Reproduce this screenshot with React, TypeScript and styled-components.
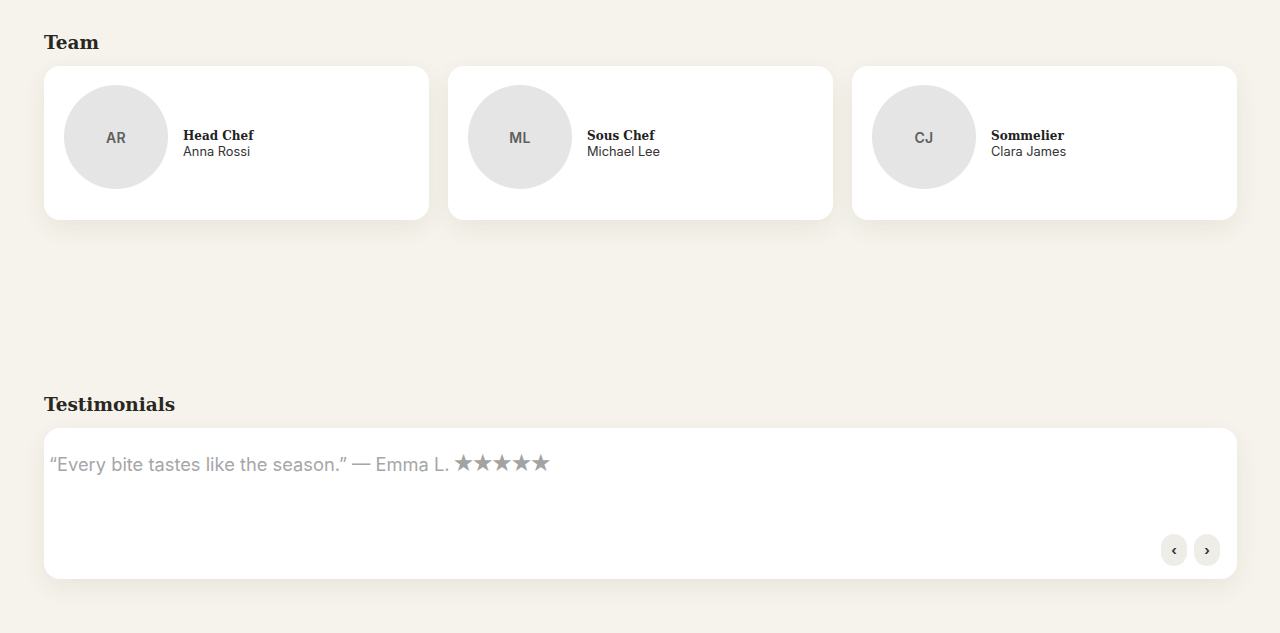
import React from "react";
import styled, { createGlobalStyle } from "styled-components";

const Global = createGlobalStyle`
  html, body { margin: 0; padding: 0; background: #f6f3ec; }
  body { font-family: Inter, "Noto Sans", sans-serif; }
`;

const Page = styled.main`
  padding: 31px 43px 40px 44px;
  min-height: 633px;
  box-sizing: border-box;
`;

const Section = styled.section<{ $gap?: number }>`
  margin-top: ${(p) => p.$gap ?? 0}px;
`;

const Heading = styled.h2`
  margin: 0 0 11px;
  font-family: "DejaVu Serif", Georgia, serif;
  font-weight: 700;
  font-size: 18.5px;
  line-height: 24px;
  color: #2a2723;
`;

const Grid = styled.div`
  display: grid;
  grid-template-columns: repeat(3, 1fr);
  gap: 19px;
`;

const Card = styled.div`
  background: #fff;
  border-radius: 16px;
  box-shadow: 0 8px 24px rgba(60, 50, 30, 0.07);
`;

const MemberCard = styled(Card)`
  display: flex;
  align-items: center;
  gap: 15px;
  height: 154px;
  box-sizing: border-box;
  padding: 19px 20px;
`;

const Avatar = styled.div`
  align-self: flex-start;
  width: 104px;
  height: 104px;
  border-radius: 50%;
  background: #e5e5e5;
  display: flex;
  align-items: center;
  justify-content: center;
  font-family: Inter, sans-serif;
  font-weight: 600;
  font-size: 14px;
  color: #5e5e5e;
  letter-spacing: 0.3px;
  flex-shrink: 0;
`;

const Info = styled.div`
  display: flex;
  flex-direction: column;
  padding-top: 1px;
`;

const Role = styled.div`
  font-family: "DejaVu Serif", Georgia, serif;
  font-weight: 700;
  font-size: 12px;
  line-height: 16px;
  color: #222;
`;

const Name = styled.div`
  font-family: Inter, sans-serif;
  font-size: 12.8px;
  line-height: 16px;
  color: #333;
`;

const TestimonialCard = styled(Card)`
  height: 151px;
  box-sizing: border-box;
  display: flex;
  flex-direction: column;
  justify-content: space-between;
  padding: 22px 17px 13px 5px;
`;

const Quote = styled.p`
  margin: 0;
  font-family: Inter, sans-serif;
  font-size: 18.3px;
  line-height: 28px;
  color: #a6a6a6;
`;

const Stars = styled.span`
  margin-left: -2px;
  font-family: "DejaVu Sans", sans-serif;
  font-size: 24px;
  line-height: 20px;
  letter-spacing: -2.2px;
  color: #a3a3a3;
`;

const Controls = styled.div`
  display: flex;
  justify-content: flex-end;
  gap: 7px;
`;

const NavButton = styled.button`
  width: 26px;
  height: 32px;
  border: none;
  border-radius: 13px;
  background: #efede7;
  color: #333;
  font-family: Inter, sans-serif;
  font-size: 13px;
  font-weight: 700;
  padding: 0;
  cursor: pointer;
`;

const team = [
  { initials: "AR", role: "Head Chef", name: "Anna Rossi" },
  { initials: "ML", role: "Sous Chef", name: "Michael Lee" },
  { initials: "CJ", role: "Sommelier", name: "Clara James" },
];

export default function App() {
  return (
    <>
      <Global />
      <Page>
        <Section>
          <Heading>Team</Heading>
          <Grid>
            {team.map((m) => (
              <MemberCard key={m.initials}>
                <Avatar>{m.initials}</Avatar>
                <Info>
                  <Role>{m.role}</Role>
                  <Name>{m.name}</Name>
                </Info>
              </MemberCard>
            ))}
          </Grid>
        </Section>
        <Section $gap={173}>
          <Heading>Testimonials</Heading>
          <TestimonialCard>
            <Quote>
              “Every bite tastes like the season.” — Emma L. <Stars>★★★★★</Stars>
            </Quote>
            <Controls>
              <NavButton aria-label="Previous">‹</NavButton>
              <NavButton aria-label="Next">›</NavButton>
            </Controls>
          </TestimonialCard>
        </Section>
      </Page>
    </>
  );
}
